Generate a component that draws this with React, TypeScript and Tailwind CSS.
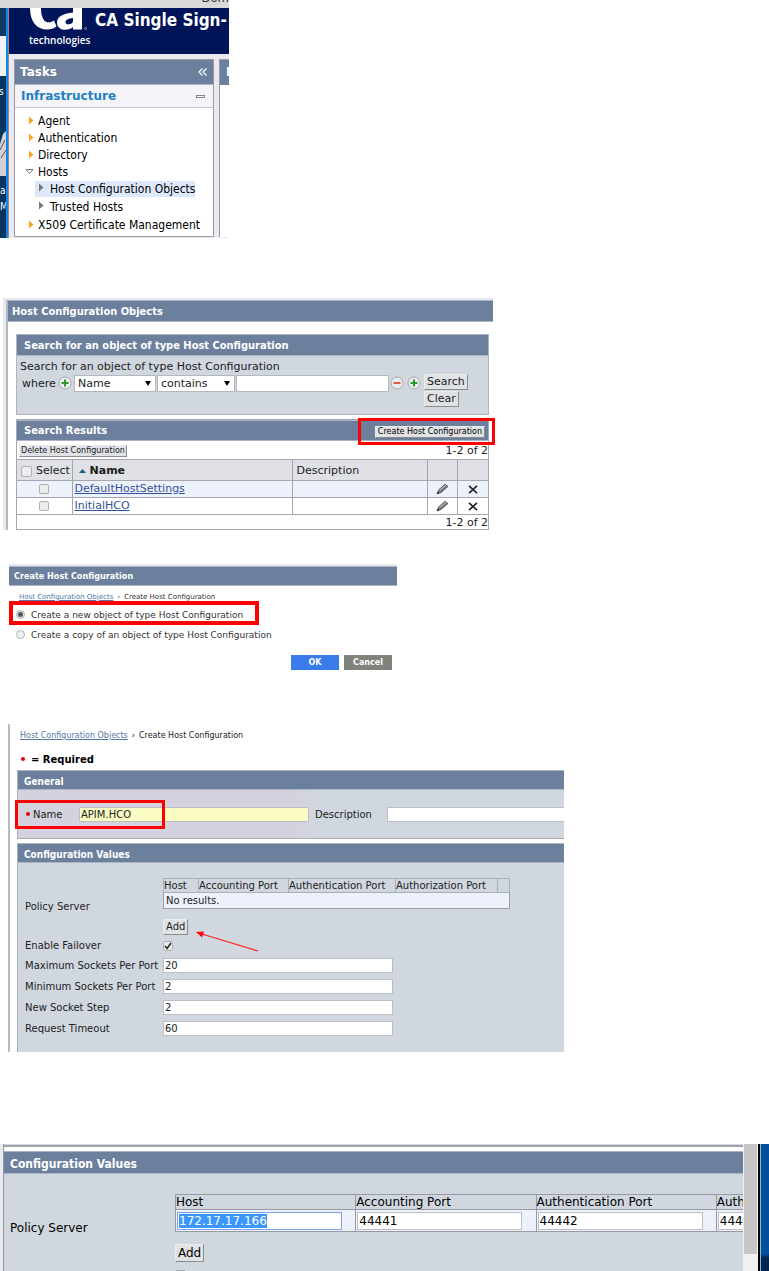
import { useEffect, useRef } from "react";
import type { ReactNode } from "react";

function TitleBar({ children, className }: { children: ReactNode; className: string }) {
  return (
    <h2
      className={`flex items-center border-y border-[#aab4c4] bg-[#6c809e] pt-0.5 font-['DejaVu_Sans_Condensed','DejaVu_Sans',sans-serif] font-bold text-white ${className}`}
    >
      {children}
    </h2>
  );
}

function Highlight({ className }: { className: string }) {
  return <div className={`pointer-events-none absolute border-[#ff0000] ${className}`} />;
}

const raised =
  "border border-t-[#ececec] border-l-[#ececec] border-r-[#8b8b8b] border-b-[#8b8b8b] bg-[#e0e2e5] whitespace-nowrap";

function RoundIcon({ kind }: { kind: "plus" | "minus" }) {
  const color = kind === "plus" ? "#2a9a2a" : "#d8603a";
  return (
    <svg width="14" height="14" viewBox="0 0 14 14" className="shrink-0">
      <circle cx="7" cy="7" r="6" fill="#eceaf0" stroke="#a8a8b0" />
      <path d={kind === "plus" ? "M3.5 7h7M7 3.5v7" : "M3.5 7h7"} stroke={color} strokeWidth="2" />
    </svg>
  );
}

function TreeArrow({ color }: { color: string }) {
  return (
    <svg width="5" height="9" viewBox="0 0 5 9" className="shrink-0">
      <path d="M0 0.5L4.5 4.5L0 8.5Z" fill={color} />
    </svg>
  );
}

function TreeLink({ label }: { label: string }) {
  return (
    <a href="#" className="flex h-[17px] items-center gap-1">
      <TreeArrow color="#f8a51b" />
      {label}
    </a>
  );
}

function SubLink({ label, className }: { label: string; className: string }) {
  return (
    <a href="#" className={`flex items-center gap-1.5 pl-1 ${className}`}>
      <span className="pb-1"><TreeArrow color="#777" /></span>
      {label}
    </a>
  );
}

function TaskPanel() {
  return (
    <section className="w-full max-w-[229px] overflow-hidden bg-[#ebe9f0] font-['DejaVu_Sans_Condensed','DejaVu_Sans',sans-serif] text-xs text-black">
      <div className="flex h-2 items-end justify-end overflow-hidden bg-[#d9d9d9] pb-[3px] text-[13px] leading-[14px] text-[#333]">
        <span>Dom</span>
      </div>
      <div className="flex">
        <svg width="9" height="230" viewBox="0 0 9 230" className="shrink-0">
          <rect width="6" height="230" fill="#06355f" />
          <rect width="6" height="28" fill="#0d3a63" />
          <rect y="28" width="6" height="40" fill="#eef1f4" />
          <path d="M0 190V136l3-10 3-3v68Z" fill="#cfd2d6" />
          <path d="M0 142l5-10M1 150l5-8" stroke="#555" />
          <rect y="168" width="6" height="62" fill="#06355f" />
          <text x="-1" y="87" fill="#fff" fontSize="10">s</text>
          <text x="0" y="186" fill="#fff" fontSize="10">a</text>
          <text x="0" y="202" fill="#fff" fontSize="10">M</text>
          <rect x="6" width="2" height="230" fill="#1b84e0" />
          <rect x="8" width="1" height="230" fill="#8d8d93" />
        </svg>
        <div className="min-w-0 flex-1">
          <header className="flex h-[46px] gap-1 overflow-hidden bg-[#00145a] pl-5 text-white">
            <div className="flex w-[62px] shrink-0 flex-col">
              <svg width="62" height="24" viewBox="0 0 62 24">
                <path d="M1 0C1 14 8 21.500 18 21.500c4 0 7-1 9.500-3l-2.500-6c-7 4.500-13 1-13-12.500Z" fill="#fff" />
                <path d="M53 0v21.500h-9v-2.500c-5 4.500-16 4-16-4.500C28 8 35 5.500 44 4.500V0ZM44 10c-5 .5-7.500 2-7.500 4 0 4 7.500 2.500 7.500-1Z" fill="#fff" fillRule="evenodd" />
                <circle cx="56.500" cy="20.500" r="1" fill="none" stroke="#cdd2e6" strokeWidth=".6" />
              </svg>
              <span className="font-['Open_Sans',sans-serif] text-[10px] leading-4 font-semibold">technologies</span>
            </div>
            <h1 className="pt-0.5 text-[17px] leading-5 font-bold whitespace-nowrap">CA Single Sign-</h1>
          </header>
          <div className="flex pt-[5px] pl-[5px]">
            <nav className="w-[200px] shrink-0 border border-[#9a9aa2] bg-white">
              <h2 className="flex h-[25px] items-center justify-between border-b border-[#aab4c4] bg-[#6c809e] px-[5px] font-['DejaVu_Sans',sans-serif] text-xs font-bold text-white">
                Tasks
                <svg width="10" height="8" viewBox="0 0 10 8">
                  <path d="M4.500 .5L1 4L4.500 7.500M8.500 .5L5 4L8.500 7.500" fill="none" stroke="#fff" strokeWidth="1.200" />
                </svg>
              </h2>
              <h3 className="flex h-[23px] items-center justify-between border-b border-[#c4c8d0] bg-[#f5f5f9] px-1.5 font-['DejaVu_Sans',sans-serif] text-xs font-bold text-[#2080c4]">
                Infrastructure
                <span className="mr-0.5 h-[3px] w-[9px] border border-[#858585] bg-white" />
              </h3>
              <div className="pt-1 pb-[3px] pl-3.5">
                <TreeLink label="Agent" />
                <TreeLink label="Authentication" />
                <TreeLink label="Directory" />
                <a href="#" className="-ml-1 flex h-[17px] items-center gap-1">
                  <svg width="9" height="5" viewBox="0 0 9 5">
                    <path d="M1 .5H8L4.500 4.500Z" fill="none" stroke="#777" />
                  </svg>
                  Hosts
                </a>
                <div className="ml-1.5 flex flex-col items-start gap-0.5 py-px">
                  <SubLink label="Host Configuration Objects" className="h-4 bg-[#dde9fb]" />
                  <SubLink label="Trusted Hosts" className="h-4" />
                </div>
                <TreeLink label="X509 Certificate Management" />
              </div>
            </nav>
            <div className="ml-[5px] flex-1 border-l border-[#9a9aa2] bg-white">
              <div className="h-[26px] overflow-hidden border-t border-[#9a9aa2] bg-[#6c809e] pl-1.5 text-[13px] leading-6 font-bold text-white">I</div>
            </div>
          </div>
        </div>
      </div>
    </section>
  );
}

function Picker({ label, options, className }: { label: string; options: string[]; className: string }) {
  return (
    <span className={`relative h-[17px] border border-[#b4b8be] bg-white ${className}`}>
      <select aria-label={label} className="block h-full w-full appearance-none bg-white pl-[3px] leading-[15px] outline-none">
        {options.map((o) => (
          <option key={o}>{o}</option>
        ))}
      </select>
      <svg width="6" height="5" viewBox="0 0 6 5" className="pointer-events-none absolute top-[5px] right-1">
        <path d="M0 0H6L3 5Z" fill="#000" />
      </svg>
    </span>
  );
}

function PencilIcon() {
  return (
    <svg width="13" height="12" viewBox="0 0 13 12" className="mx-auto block">
      <path d="M1 11l1.500-4L9 1.200 12 3.500 5 9.500Z" fill="#777" stroke="#444" strokeWidth=".7" />
      <path d="M3.500 7.500L10 2" stroke="#ccc" />
      <path d="M1 11l.8-2 1.500 1Z" fill="#111" />
    </svg>
  );
}

function CrossIcon() {
  return (
    <svg width="10" height="9" viewBox="0 0 10 9" className="mx-auto block">
      <path d="M1 .8L9 8.200M9 .8L1 8.200" stroke="#222" strokeWidth="1.600" />
    </svg>
  );
}

const box = "m-0 block appearance-none rounded-[2px] border border-[#b0b0b0] bg-[#ececec]";

function SearchPanel() {
  return (
    <section className="ml-[3px] w-full max-w-[490px] border-t-2 border-l-[3px] border-[#e6eaee] text-[11px] text-[#1c1c1c]">
      <div className="border-l-2 border-[#b5b8bf]">
        <TitleBar className="h-[22px] pl-1 text-[11px]">Host Configuration Objects</TitleBar>
        <div className="flex flex-col gap-1 pt-3 pr-1 pl-2">
          <form className="border border-t-0 border-[#b0b6be] bg-[#d0d7df]" onSubmit={(e) => e.preventDefault()}>
            <TitleBar className="h-[22px] pl-[7px] text-[11px]">Search for an object of type Host Configuration</TitleBar>
            <div className="pt-1 pb-[7px] pl-[3px]">
              <p className="leading-[14px]">Search for an object of type Host Configuration</p>
              <div className="flex items-start">
                <div className="flex flex-1 items-center gap-px pl-0.5">
                  <span className="w-[35px] pt-0.5">where</span>
                  <RoundIcon kind="plus" />
                  <Picker label="Field" options={["Name", "Description"]} className="ml-px w-[82px]" />
                  <Picker label="Operator" options={["contains", "equals"]} className="w-[78px]" />
                  <input aria-label="Search text" className="h-[17px] w-[153px] border border-[#b4b8be] bg-white px-1 outline-none" />
                  <RoundIcon kind="minus" />
                  <span className="w-px" />
                  <RoundIcon kind="plus" />
                </div>
                <div className="flex w-16 flex-col items-start gap-px">
                  <button type="submit" className={`h-4 px-0.5 leading-[14px] ${raised}`}>Search</button>
                  <button type="reset" className={`h-4 px-0.5 leading-[14px] ${raised}`}>Clear</button>
                </div>
              </div>
            </div>
          </form>
          <div className="relative border border-[#a3a8b0] bg-white">
            <TitleBar className="h-[21px] justify-between pr-[3px] pl-[7px] text-[11px]">
              Search Results
              <button
                className={`h-3 px-0.5 font-['DejaVu_Sans',sans-serif] text-[8px] leading-[10px] font-normal text-black ${raised}`}
              >
                Create Host Configuration
              </button>
            </TitleBar>
            <div className="flex h-[18px] items-center justify-between pt-0.5 pl-0.5">
              <button className={`h-3 px-px text-[8px] leading-[10px] ${raised}`}>Delete Host Configuration</button>
              <span>1-2 of 2</span>
            </div>
            <table className="w-full table-fixed border-collapse text-left">
              <colgroup>
                <col className="w-[55px]" />
                <col />
                <col className="w-[135px]" />
                <col className="w-[30px]" />
                <col className="w-[31px]" />
              </colgroup>
              <thead className="bg-[#dfe1e6]">
                <tr className="h-[21px] border-y border-[#a3a8b0] [&>th]:pt-0.5">
                  <th className="border-r border-[#a3a8b0] pl-1 font-normal">
                    <label className="flex items-center gap-1"><input type="checkbox" className={`${box} size-[11px]`} />Select</label>
                  </th>
                  <th className="border-r border-[#a3a8b0] pl-1.5">
                    <span className="flex items-center gap-1">
                      <svg width="7" height="4" viewBox="0 0 7 4"><path d="M0 4L3.500 0L7 4Z" fill="#1b5f80" /></svg>
                      Name
                    </span>
                  </th>
                  <th className="border-r border-[#a3a8b0] pl-1 font-normal">Description</th>
                  <th className="border-r border-[#a3a8b0]" />
                  <th />
                </tr>
              </thead>
              <tbody>
                {["DefaultHostSettings", "InitialHCO"].map((name) => (
                  <tr key={name} className="h-[17px] border-b border-[#a3a8b0] leading-4 odd:bg-[#edf1fb]">
                    <td className="border-r border-[#a3a8b0]">
                      <input type="checkbox" aria-label={`Select ${name}`} className={`${box} mx-auto! size-[10px]`} />
                    </td>
                    <td className="border-r border-[#a3a8b0] pl-0.5"><a href="#" className="text-[#33519a] underline">{name}</a></td>
                    <td className="border-r border-[#a3a8b0]" />
                    <td className="border-r border-[#a3a8b0]"><button aria-label={`Edit ${name}`} className="block w-full"><PencilIcon /></button></td>
                    <td><button aria-label={`Delete ${name}`} className="block w-full"><CrossIcon /></button></td>
                  </tr>
                ))}
              </tbody>
            </table>
            <p className="pt-px text-right leading-[13px]">1-2 of 2</p>
            <Highlight className="-top-0.5 -right-[7px] h-[27px] w-[137px] border-[3px]" />
          </div>
        </div>
      </div>
    </section>
  );
}

function Breadcrumbs({ className }: { className: string }) {
  return (
    <nav className={`flex items-center whitespace-nowrap ${className}`}>
      <a href="#" className="text-[#5277a5] underline">Host Configuration Objects</a>
      <span>›</span>
      <span>Create Host Configuration</span>
    </nav>
  );
}

function CreateChoice() {
  return (
    <section className="ml-[9px] w-full max-w-[388px] border-t-2 border-[#e6eaee] text-[9px] text-[#333]">
      <TitleBar className="h-5 pl-[5px] text-[9px]">Create Host Configuration</TitleBar>
      <Breadcrumbs className="h-[22px] gap-1 pl-2.5 text-[7px]" />
      <div className="relative flex flex-col gap-1 pl-[7px]">
        <label className="flex h-4 items-center gap-1.5">
          <span className="pb-1">
            <input type="radio" name="mode" defaultChecked className="block size-[9px] appearance-none rounded-full border border-[#aaa] bg-[radial-gradient(circle,#555_0_2px,#e8e8e8_3px)]" />
          </span>
          Create a new object of type Host Configuration
        </label>
        <label className="flex h-4 items-center gap-1.5">
          <span className="pb-1">
            <input type="radio" name="mode" className="block size-[9px] appearance-none rounded-full border border-[#b5b5b5] bg-[#eee]" />
          </span>
          Create a copy of an object of type Host Configuration
        </label>
        <Highlight className="-top-[7px] left-0 h-6 w-[250px] border-4" />
      </div>
      <div className="flex justify-end gap-[5px] pt-[11px] pr-[5px] text-[8px] font-bold text-white">
        <button className="h-[15px] w-12 bg-[#397be8]">OK</button>
        <button className="h-[15px] w-12 bg-[#80827c]">Cancel</button>
      </div>
    </section>
  );
}

const field = "border border-[#bcbfc5] px-px text-[#222] outline-none";

function HostForm() {
  const rows = [
    ["Maximum Sockets Per Port", "20"],
    ["Minimum Sockets Per Port", "2"],
    ["New Socket Step", "2"],
    ["Request Timeout", "60"],
  ];
  return (
    <section className="ml-2 w-full max-w-[556px] overflow-hidden border-l-2 border-[#b9b9be] pl-[7px] text-[10px] text-[#222]">
      <Breadcrumbs className="h-6 gap-1 pl-[3px] text-[8px]" />
      <p className="flex h-[22px] items-center gap-1.5 pl-1 font-bold text-black">
        <span className="size-1 rounded-full bg-red-600" />
        <span>= Required</span>
      </p>
      <div className="relative border-l border-[#a9aeb8]">
        <TitleBar className="h-5 pl-1.5 text-[10px]">General</TitleBar>
        <div className="flex h-[49px] items-center border-b border-[#aaa] bg-linear-to-r from-[#d3d2de] from-50% to-[#d0d7df] to-55% pl-2">
          <span className="mr-[3px] size-1 rounded-full bg-red-600" />
          <label htmlFor="name" className="w-[46px]">Name</label>
          <input id="name" defaultValue="APIM.HCO" className={`h-[15px] w-[230px] bg-[#fafcc4] ${field}`} />
          <label htmlFor="desc" className="w-[78px] pl-1.5">Description</label>
          <input id="desc" className={`h-[15px] min-w-0 flex-1 border-r-0! bg-white ${field}`} />
        </div>
        <Highlight className="top-[30px] -left-[3px] h-[29px] w-[150px] border-[3px]" />
      </div>
      <div className="relative mt-1 border-l border-[#a9aeb8] bg-[#d0d7df]">
        <TitleBar className="h-5 pl-1.5 text-[10px]">Configuration Values</TitleBar>
        <div className="flex flex-col pt-[15px] pb-4 pl-[7px]">
          <div className="flex">
            <span className="w-[138px] pt-[21px]">Policy Server</span>
            <div>
              <table className="w-[347px] table-fixed border-collapse border border-[#9a9fa8] text-left leading-[13px]">
                <colgroup>
                  <col className="w-[35px]" />
                  <col className="w-[90px]" />
                  <col className="w-[107px]" />
                  <col className="w-[102px]" />
                  <col />
                </colgroup>
                <thead>
                  <tr className="whitespace-nowrap [&>th]:border [&>th]:border-[#a9aeb8] [&>th]:font-normal">
                    <th>Host</th>
                    <th>Accounting Port</th>
                    <th>Authentication Port</th>
                    <th>Authorization Port</th>
                    <th />
                  </tr>
                </thead>
                <tbody>
                  <tr className="bg-[#edf1fb]"><td colSpan={5} className="h-4 pl-0.5">No results.</td></tr>
                </tbody>
              </table>
              <button className={`mt-2.5 block h-4 px-0.5 leading-3 ${raised}`}>Add</button>
            </div>
          </div>
          <div className="flex h-[21px] items-center">
            <label htmlFor="failover" className="w-[138px]">Enable Failover</label>
            <span className="relative">
              <input id="failover" type="checkbox" defaultChecked className={`${box} size-[10px]`} />
              <svg width="8" height="8" viewBox="0 0 8 8" className="pointer-events-none absolute top-px left-px">
                <path d="M1 4l2 2.500L7 1" fill="none" stroke="#222" strokeWidth="1.500" />
              </svg>
            </span>
          </div>
          <div className="flex flex-col gap-1.5 pt-0.5">
            {rows.map(([label, value]) => (
              <div key={label} className="flex h-[15px] items-center">
                <label htmlFor={label} className="w-[138px] whitespace-nowrap">{label}</label>
                <input id={label} defaultValue={value} className={`h-[15px] w-[230px] bg-white ${field}`} />
              </div>
            ))}
          </div>
        </div>
        <svg width="64" height="22" viewBox="0 0 64 22" className="pointer-events-none absolute top-[88px] left-[177px]">
          <path d="M63 20L7 3" stroke="#f22" strokeWidth="1.300" />
          <path d="M1 1l8-.5L7 6.500Z" fill="#f00" />
        </svg>
      </div>
    </section>
  );
}

function PolicyServerRow() {
  const host = useRef<HTMLInputElement>(null);
  useEffect(() => {
    host.current?.focus({ preventScroll: true });
    host.current?.select();
  }, []);
  const columns = [
    ["Host", "172.17.17.166"],
    ["Accounting Port", "44441"],
    ["Authentication Port", "44442"],
    ["Authorization Port", "44443"],
  ];
  return (
    <section className="flex w-full overflow-hidden bg-[#d0d7df] text-xs text-black">
      <div className="w-1 shrink-0 border-r border-[#96999f] bg-[#e8ecf1]" />
      <div className="min-w-0 flex-1 overflow-hidden">
        <div className="mt-px h-1.5 border-t-2 border-[#a1a4aa] bg-white" />
        <TitleBar className="h-[23px] pl-1.5 text-xs">Configuration Values</TitleBar>
        <div className="flex pt-5 pb-2 pl-1.5">
          <span className="w-[165px] shrink-0 pt-[26px]">Policy Server</span>
          <div className="shrink-0">
            <table className="w-[722px] table-fixed border-collapse text-left">
              <thead>
                <tr className="h-[15px] leading-[14px]">
                  {columns.map(([title]) => (
                    <th key={title} className="border border-[#969ba3] font-normal whitespace-nowrap">{title}</th>
                  ))}
                </tr>
              </thead>
              <tbody>
                <tr className="h-[22px] bg-[#edf1fb]">
                  {columns.map(([title, value], i) => (
                    <td key={title} className="border border-[#969ba3] px-px">
                      <input
                        ref={i === 0 ? host : undefined}
                        aria-label={title}
                        defaultValue={value}
                        className="block h-[18px] w-[165px] border border-[#bcbfc5] bg-white px-px outline-none selection:bg-[#3b97fc] selection:text-white focus:border-[#7ba4e6]"
                      />
                    </td>
                  ))}
                </tr>
              </tbody>
            </table>
            <button className={`mt-3 block h-[18px] px-0.5 leading-4 ${raised}`}>Add</button>
          </div>
        </div>
        <div className="ml-[172px] h-px w-[9px] bg-[#a5a8ad]" />
      </div>
      <div className="w-[15px] shrink-0 bg-[#f1f1f1]">
        <div className="mx-px h-[110px] bg-[#c6c6c6]" />
      </div>
      <div className="w-[3px] shrink-0 border-r border-l-2 border-r-[#8bb7dc] border-l-black bg-white" />
      <div className="w-2 shrink-0 bg-[linear-gradient(#00509c_0_86%,#00244e_90%)]" />
    </section>
  );
}

export default function App() {
  return (
    <main className="flex flex-col overflow-hidden bg-white font-['DejaVu_Sans',sans-serif]">
      <TaskPanel />
      <div className="mt-[60px]"><SearchPanel /></div>
      <div className="mt-[34px]"><CreateChoice /></div>
      <div className="mt-[54px]"><HostForm /></div>
      <div className="mt-[92px]"><PolicyServerRow /></div>
    </main>
  );
}
